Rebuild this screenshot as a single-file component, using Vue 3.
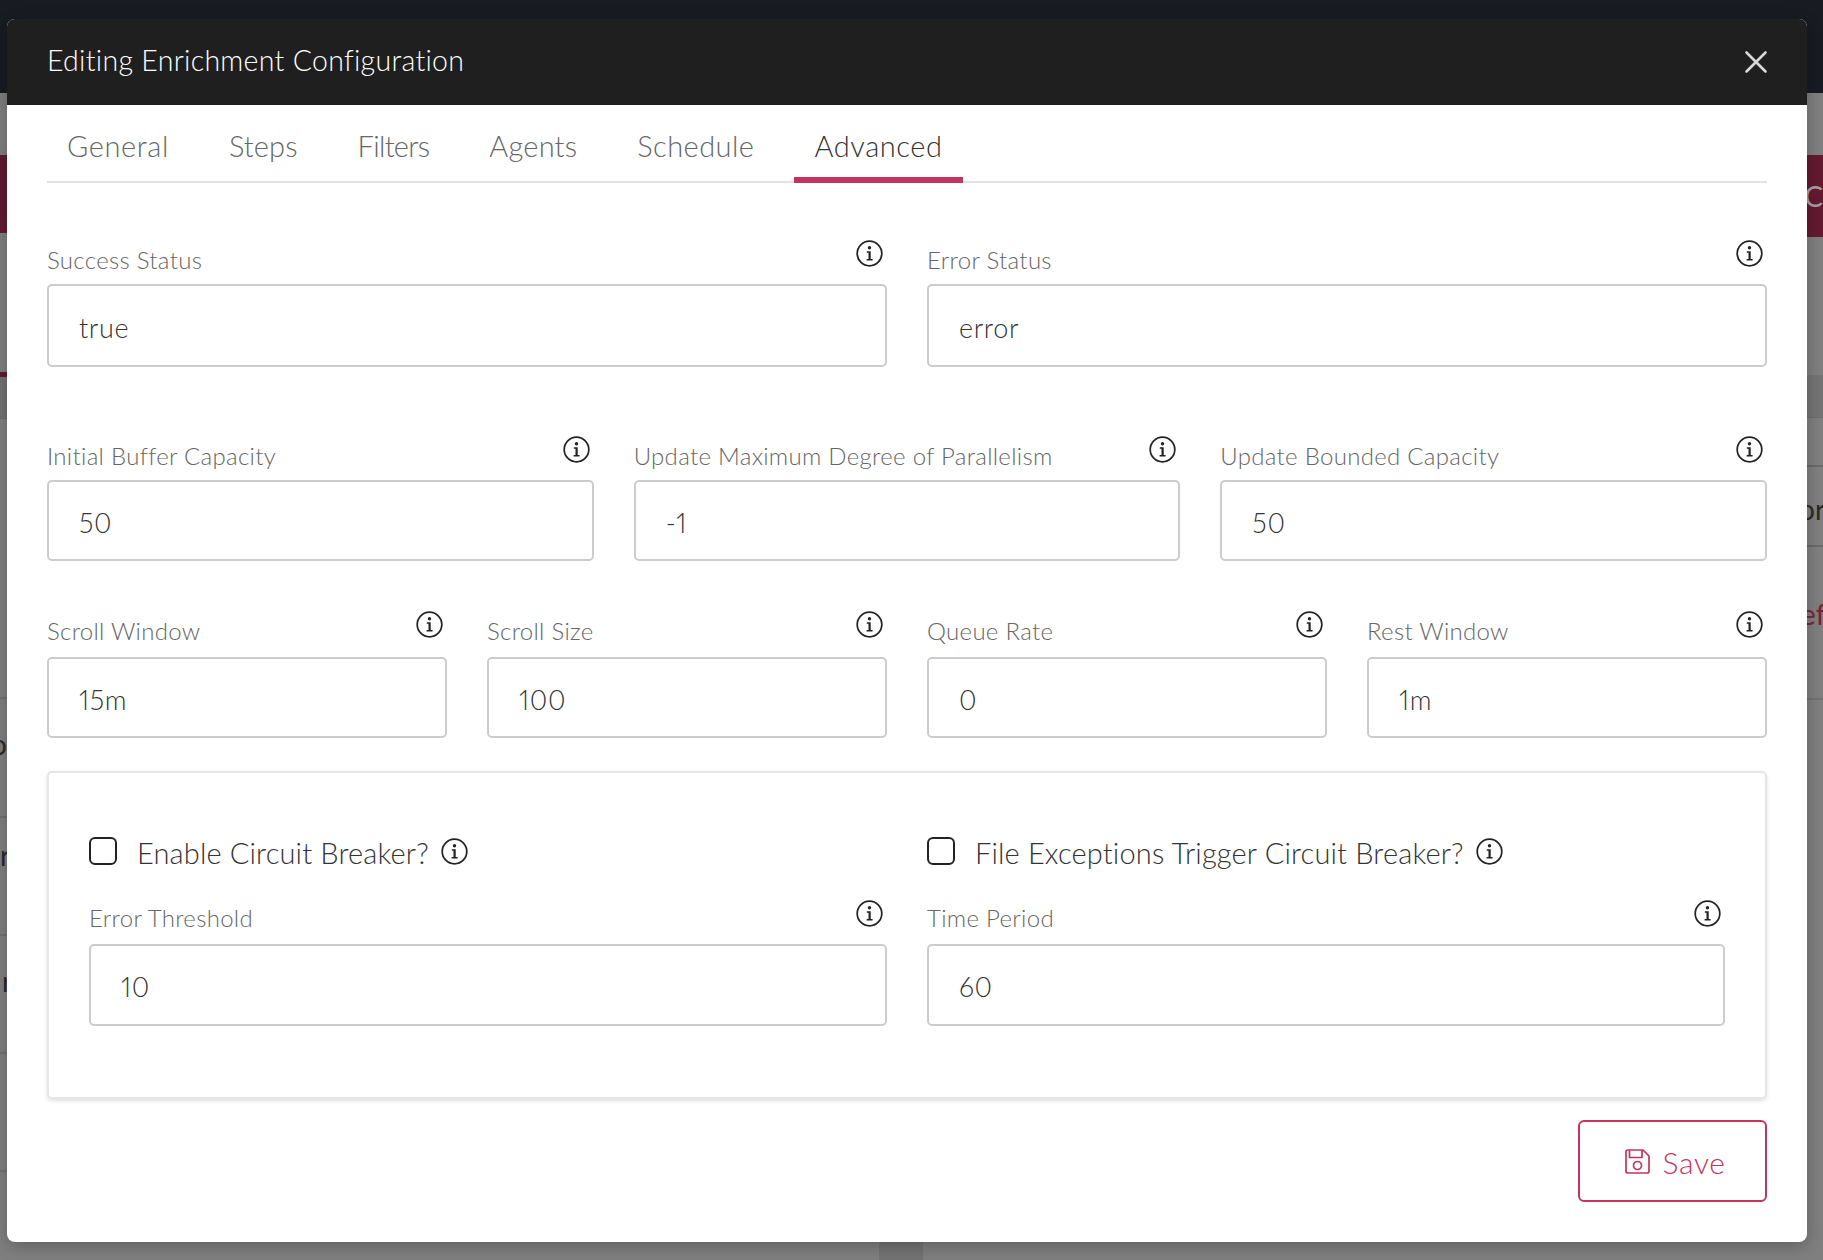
<template>
  <div class="page">
    <svg class="defs" width="0" height="0">
      <symbol id="info-icon" viewBox="0 0 27 27">
        <circle cx="13.5" cy="13.5" r="12.3" fill="none" stroke="#222" stroke-width="1.7" />
        <circle cx="13.5" cy="7.8" r="1.7" fill="#222" />
        <path d="M10.8 11.2 H14.7 V19 H16.6 V20.6 H10.6 V19 H12.5 V12.8 H10.8 Z" fill="#222" />
      </symbol>
    </svg>

    <!-- dimmed page behind the dialog -->
    <div class="backdrop">
      <div class="bg-top"></div>
      <div class="bg-columns">
        <div class="bg-left">
          <div class="bg-banner left"></div>
          <div class="bg-crimson"></div>
          <div class="bg-head"></div>
          <div class="bg-cell tall"></div>
          <div class="bg-cell glyph-o"><span>o</span></div>
          <div class="bg-cell glyph-r"><span>r</span></div>
          <div class="bg-cell glyph-r2"><span>r</span></div>
          <div class="bg-cell"></div>
        </div>
        <div class="bg-mid">
          <div class="bg-foot"></div>
        </div>
        <div class="bg-right">
          <div class="bg-banner right"><span>C</span></div>
          <div class="bg-strip"></div>
          <div class="bg-strip-b"></div>
          <div class="bg-text-row dark"><span>or</span></div>
          <div class="bg-text-row crimson"><span>ef</span></div>
        </div>
      </div>
    </div>

    <div class="modal">
      <div class="modal-header">
        <span class="modal-title">Editing Enrichment Configuration</span>
        <svg class="close" viewBox="0 0 24 24" width="24" height="24">
          <path d="M2.5 2.5 L21.5 21.5 M21.5 2.5 L2.5 21.5" stroke="#d8d8d8" stroke-width="2.6" stroke-linecap="round" fill="none" />
        </svg>
      </div>

      <div class="modal-body">
        <div class="tabs">
          <div
            v-for="tab in tabs"
            :key="tab"
            class="tab"
            :class="{ active: tab === 'Advanced' }"
          >{{ tab }}</div>
        </div>

        <div class="form-row two first">
          <div v-for="f in rowOne" :key="f.label" class="field">
            <div class="field-head">
              <label>{{ f.label }}</label>
              <svg class="info" width="27" height="27"><use href="#info-icon" /></svg>
            </div>
            <div class="input">{{ f.value }}</div>
          </div>
        </div>

        <div class="form-row three">
          <div v-for="f in rowTwo" :key="f.label" class="field">
            <div class="field-head">
              <label>{{ f.label }}</label>
              <svg class="info" width="27" height="27"><use href="#info-icon" /></svg>
            </div>
            <div class="input">{{ f.value }}</div>
          </div>
        </div>

        <div class="form-row four">
          <div v-for="f in rowThree" :key="f.label" class="field">
            <div class="field-head">
              <label>{{ f.label }}</label>
              <svg class="info" width="27" height="27"><use href="#info-icon" /></svg>
            </div>
            <div class="input">{{ f.value }}</div>
          </div>
        </div>

        <div class="card">
          <div class="form-row two">
            <div v-for="c in breaker" :key="c.check" class="breaker-col">
              <div class="check-row">
                <span class="checkbox"></span>
                <span class="check-label">{{ c.check }}</span>
                <svg class="info" width="27" height="27"><use href="#info-icon" /></svg>
              </div>
              <div class="field">
                <div class="field-head">
                  <label>{{ c.label }}</label>
                  <svg class="info" width="27" height="27"><use href="#info-icon" /></svg>
                </div>
                <div class="input">{{ c.value }}</div>
              </div>
            </div>
          </div>
        </div>

        <div class="actions">
          <button class="save">
            <svg viewBox="0 0 25 25" width="25" height="25" fill="none" stroke="#c4345c" stroke-width="1.7" stroke-linejoin="round">
              <path d="M1 3 Q1 1 3 1 H18 L24 7 V22 Q24 24 22 24 H3 Q1 24 1 22 Z" />
              <path d="M4.5 1 V8.5 H17 V1" />
              <circle cx="12.5" cy="16.5" r="4" />
            </svg>
            <span>Save</span>
          </button>
        </div>
      </div>
    </div>
  </div>
</template>

<script setup>
const tabs = ['General', 'Steps', 'Filters', 'Agents', 'Schedule', 'Advanced']

const rowOne = [
  { label: 'Success Status', value: 'true' },
  { label: 'Error Status', value: 'error' },
]
const rowTwo = [
  { label: 'Initial Buffer Capacity', value: '50' },
  { label: 'Update Maximum Degree of Parallelism', value: '-1' },
  { label: 'Update Bounded Capacity', value: '50' },
]
const rowThree = [
  { label: 'Scroll Window', value: '15m' },
  { label: 'Scroll Size', value: '100' },
  { label: 'Queue Rate', value: '0' },
  { label: 'Rest Window', value: '1m' },
]
const breaker = [
  { check: 'Enable Circuit Breaker?', label: 'Error Threshold', value: '10' },
  { check: 'File Exceptions Trigger Circuit Breaker?', label: 'Time Period', value: '60' },
]
</script>

<style>
html,
body {
  margin: 0;
  background: #7f7f7f;
}
</style>

<style scoped>
.page {
  position: relative;
  width: 1823px;
  height: 1260px;
  overflow: hidden;
  font-family: "Lato", "Liberation Sans", sans-serif;
  background: #7f7f7f;
}

.defs {
  position: absolute;
}

.backdrop {
  height: 1260px;
  display: flex;
  flex-direction: column;
  overflow: hidden;
}

.bg-top {
  height: 93px;
  background: #181c22;
}

.bg-columns {
  flex: 1;
  display: flex;
}

.bg-left {
  width: 7px;
  overflow: hidden;
  padding-top: 62px;
}

.bg-mid {
  width: 872px;
  margin-right: 928px;
  display: flex;
  flex-direction: column;
  justify-content: flex-end;
}

.bg-foot {
  width: 44px;
  height: 18px;
  margin-left: 872px;
  background: #737373;
}

.bg-right {
  width: 16px;
  overflow: hidden;
  padding-top: 62px;
}

.bg-banner {
  background: #641a30;
}

.bg-banner.left {
  height: 78px;
  margin-bottom: 139px;
}

.bg-banner.right {
  height: 82px;
  display: flex;
  align-items: center;
  justify-content: flex-end;
  color: #aaa0a4;
  font-size: 28px;
}

.bg-crimson {
  height: 5px;
  background: #641a30;
}

.bg-head {
  height: 42px;
  background: #727272;
  border-bottom: 1px solid #6c6c6c;
  box-sizing: border-box;
}

.bg-cell {
  height: 118px;
  box-sizing: border-box;
  border-bottom: 2px solid #727272;
  color: #2a2a2a;
  font-size: 28px;
  line-height: 28px;
  white-space: nowrap;
}

.bg-cell.tall {
  height: 280px;
}

.glyph-o {
  height: 119px;
  padding-top: 31px;
}

.glyph-o span {
  margin-left: -9px;
}

.glyph-r {
  padding-top: 23px;
}

.glyph-r2 {
  padding-top: 31px;
}

.glyph-r2 span {
  margin-left: 2px;
}

.bg-strip {
  height: 139px;
  border-bottom: 1px solid #757575;
  box-sizing: border-box;
}

.bg-strip-b {
  height: 42px;
  background: #747474;
  border-bottom: 1px solid #6e6e6e;
  box-sizing: border-box;
}

.bg-text-row {
  font-size: 28px;
  white-space: nowrap;
}

.bg-text-row.dark {
  height: 78px;
  border-top: 2px solid #6a6a6a;
  border-bottom: 2px solid #6a6a6a;
  margin-top: 47px;
  line-height: 84px;
  color: #2a2a2a;
}

.bg-text-row.dark span {
  margin-left: -8px;
}

.bg-text-row.crimson {
  height: 151px;
  color: #7a2238;
  line-height: 134px;
  border-bottom: 2px solid #717171;
}

.bg-text-row.crimson span {
  margin-left: -6px;
}

.modal {
  position: absolute;
  left: 7px;
  top: 19px;
  width: 1800px;
  height: 1223px;
  background: #fff;
  border-radius: 8px;
  box-shadow: 0 4px 16px rgba(0, 0, 0, 0.25);
}

.modal-header {
  height: 86px;
  background: #1f1f1f;
  border-radius: 8px 8px 0 0;
  display: flex;
  align-items: center;
  justify-content: space-between;
  padding: 0 39px 0 40px;
}

.modal-title {
  color: #fff;
  font-size: 28.5px;
  font-weight: 300;
  letter-spacing: 0.3px;
  padding-bottom: 4px;
}

.modal-body {
  padding: 0 40px;
}

.tabs {
  display: flex;
  gap: 20px;
  height: 78px;
  box-sizing: border-box;
  border-bottom: 2px solid #e2e2e2;
}

.tab {
  padding: 0 20px;
  height: 78px;
  line-height: 81px;
  font-size: 29px;
  font-weight: 300;
  letter-spacing: 0.6px;
  color: #666;
  box-sizing: border-box;
}

.tab:nth-child(2) {
  letter-spacing: 0.1px;
}

.tab:nth-child(3) {
  letter-spacing: -0.7px;
}

.tab:nth-child(4) {
  letter-spacing: 0.2px;
}

.tab:nth-child(5) {
  letter-spacing: 0.45px;
}

.tab.active {
  color: #333;
  border-bottom: 6px solid #c4345c;
}

.form-row {
  display: grid;
  column-gap: 40px;
}

.form-row.two {
  grid-template-columns: repeat(2, 1fr);
}

.form-row.three {
  grid-template-columns: repeat(3, 1fr);
  margin-top: 69px;
}

.form-row.four {
  grid-template-columns: repeat(4, 1fr);
  margin-top: 52px;
}

.form-row.first {
  margin-top: 57px;
}

.form-row.first .input {
  height: 83px;
}

.form-row.four .field-head {
  height: 46px;
  margin-top: -2px;
}

.field-head {
  display: flex;
  justify-content: space-between;
  align-items: flex-start;
  height: 44px;
  padding-right: 4px;
}

.field-head label {
  font-size: 24px;
  font-weight: 300;
  letter-spacing: 0.3px;
  color: #666;
  margin-top: 5px;
}

.input {
  box-sizing: border-box;
  height: 81px;
  border: 2px solid #ccc;
  border-radius: 5px;
  padding: 3px 30px 0;
  display: flex;
  align-items: center;
  font-size: 27px;
  font-weight: 300;
  letter-spacing: 0.6px;
  font-variant-numeric: proportional-nums;
  color: #333;
}

.card {
  margin-top: 33px;
  height: 328px;
  box-sizing: border-box;
  border-radius: 5px;
  border: 2px solid #e6e6e6;
  box-shadow: 0 2px 4px rgba(0, 0, 0, 0.12);
  padding: 63px 40px 0;
}

.card .input {
  height: 82px;
}

.card .field-head label {
  margin-top: 3px;
}

.check-row {
  display: flex;
  align-items: center;
  height: 30px;
  margin-bottom: 34px;
}

.checkbox {
  width: 28px;
  height: 28px;
  box-sizing: border-box;
  border: 2px solid #222;
  border-radius: 6px;
  margin-right: 20px;
}

.check-label {
  font-size: 29px;
  font-weight: 300;
  letter-spacing: 0.15px;
  color: #333;
  margin-right: 12px;
  padding-top: 2px;
}

.actions {
  display: flex;
  justify-content: flex-end;
  margin-top: 21px;
}

.save {
  width: 189px;
  height: 82px;
  box-sizing: border-box;
  background: #fff;
  border: 2px solid #c4345c;
  border-radius: 6px;
  display: flex;
  align-items: center;
  justify-content: center;
  gap: 13px;
  color: #c4345c;
  font-family: inherit;
  font-size: 30px;
  font-weight: 300;
  letter-spacing: 0.6px;
  padding: 1px 0 0 5px;
}
</style>
